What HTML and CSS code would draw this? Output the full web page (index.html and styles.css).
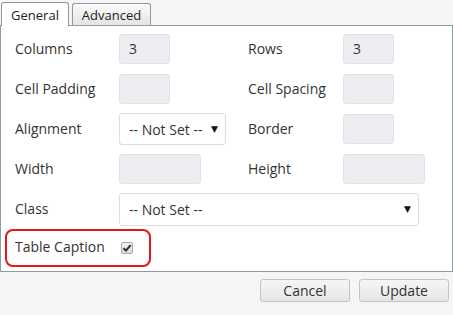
FILE: index.html
```html
<!DOCTYPE html>
<html>
<head>
<meta charset="utf-8">
<link rel="stylesheet" href="styles.css">
</head>
<body>
<div class="dialog">
  <div class="tabs">
    <div class="tab active">General</div>
    <div class="tab">Advanced</div>
  </div>
  <div class="panel">
    <div class="form">
      <label class="lbl">Columns</label>
      <div class="field"><div class="input sm">3</div></div>
      <label class="lbl">Rows</label>
      <div class="field"><div class="input sm">3</div></div>

      <label class="lbl">Cell Padding</label>
      <div class="field"><div class="input sm"></div></div>
      <label class="lbl">Cell Spacing</label>
      <div class="field"><div class="input sm"></div></div>

      <label class="lbl">Alignment</label>
      <div class="field"><div class="select align"><span>-- Not Set --</span><span class="arrow">▼</span></div></div>
      <label class="lbl">Border</label>
      <div class="field"><div class="input sm"></div></div>

      <label class="lbl">Width</label>
      <div class="field"><div class="input md"></div></div>
      <label class="lbl">Height</label>
      <div class="field"><div class="input md"></div></div>

      <label class="lbl">Class</label>
      <div class="field wide"><div class="select cls"><span>-- Not Set --</span><span class="arrow">▼</span></div></div>

      <div class="caption-row">
        <div class="caption-box">
          <span class="cap-label">Table Caption</span>
          <span class="checkbox"><svg width="10" height="10" viewBox="0 0 10 10"><path d="M1.5 5.2 L4 7.6 L8.6 2.2" fill="none" stroke="#2b2b2b" stroke-width="2"/></svg></span>
        </div>
      </div>
    </div>
  </div>
  <div class="footer">
    <button class="btn">Cancel</button>
    <button class="btn">Update</button>
  </div>
</div>
</body>
</html>
```
FILE: styles.css
```css
html, body {
  margin: 0;
  padding: 0;
  background: #f5f5f5;
  font-family: "Open Sans", "Liberation Sans", sans-serif;
  color: #333;
}
.dialog {
  width: 453px;
  height: 315px;
}
.tabs {
  display: flex;
  align-items: flex-end;
  height: 25px;
  padding-left: 1px;
  gap: 3px;
  position: relative;
  z-index: 1;
}
.tab {
  box-sizing: border-box;
  font-size: 13px;
  color: #222;
  border: 1px solid #919b9c;
  border-bottom: none;
  border-radius: 3px 3px 0 0;
  display: flex;
  align-items: center;
  justify-content: center;
}
.tab.active {
  width: 68px;
  height: 24px;
  background: #fff;
  margin-bottom: -1px;
  padding-top: 1px;
}
.tab:not(.active) {
  width: 79px;
  height: 22px;
  background: linear-gradient(#fbfbfb, #e4e4e4);
}
.panel {
  box-sizing: border-box;
  width: 453px;
  height: 247px;
  border: 1px solid #919b9c;
  background: #fff;
}
.form {
  display: grid;
  grid-template-columns: 104px 129px 95px 1fr;
  grid-auto-rows: 40px;
  align-items: center;
  padding: 3px 0 0 14px;
}
.lbl {
  font-size: 14px;
  color: #333;
  margin-top: -2px;
}
.field { display: flex; align-items: center; }
.field.wide { grid-column: 2 / 5; }
.input {
  box-sizing: border-box;
  height: 30px;
  background: #eeeef2;
  border: 1px solid #e2e2e6;
  border-radius: 3px;
  font-size: 14px;
  line-height: 28px;
  padding-left: 9px;
  color: #333;
}
.input.sm { width: 51px; }
.input.md { width: 82px; }
.select {
  box-sizing: border-box;
  height: 32px;
  background: #fff;
  border: 1px solid #ddd;
  border-radius: 3px;
  font-size: 14px;
  display: flex;
  align-items: center;
  justify-content: space-between;
  padding: 0 7px 0 9px;
  color: #333;
}
.select.align { width: 107px; }
.select.cls { width: 300px; height: 33px; }
.arrow {
  font-size: 9px;
  color: #111;
  font-family: "DejaVu Sans", sans-serif;
}
.caption-row {
  grid-column: 1 / 5;
  margin-left: -10px;
  margin-top: -2px;
  display: flex;
}
.caption-box {
  box-sizing: border-box;
  width: 146px;
  height: 38px;
  border: 2px solid #e8141b;
  border-radius: 8px;
  display: flex;
  align-items: center;
  padding-left: 8px;
}
.cap-label {
  font-size: 14px;
  color: #333;
  width: 106px;
  margin-top: -3px;
}
.checkbox {
  box-sizing: border-box;
  width: 12px;
  height: 12px;
  border: 1px solid #a8a8a8;
  border-radius: 2px;
  background: linear-gradient(#f2f2f2, #dcdcdc);
  display: flex;
  align-items: center;
  justify-content: center;
}
.footer {
  display: flex;
  justify-content: flex-end;
  gap: 9px;
  padding: 7px 4px 0 0;
}
.btn {
  box-sizing: border-box;
  width: 90px;
  height: 23px;
  border: 1px solid #c4c4c4;
  border-radius: 3px;
  background: linear-gradient(#f6f6f6, #e6e6e6);
  font-family: "Open Sans", "Liberation Sans", sans-serif;
  font-size: 14px;
  color: #333;
  padding: 0;
  line-height: 20px;
}
```
